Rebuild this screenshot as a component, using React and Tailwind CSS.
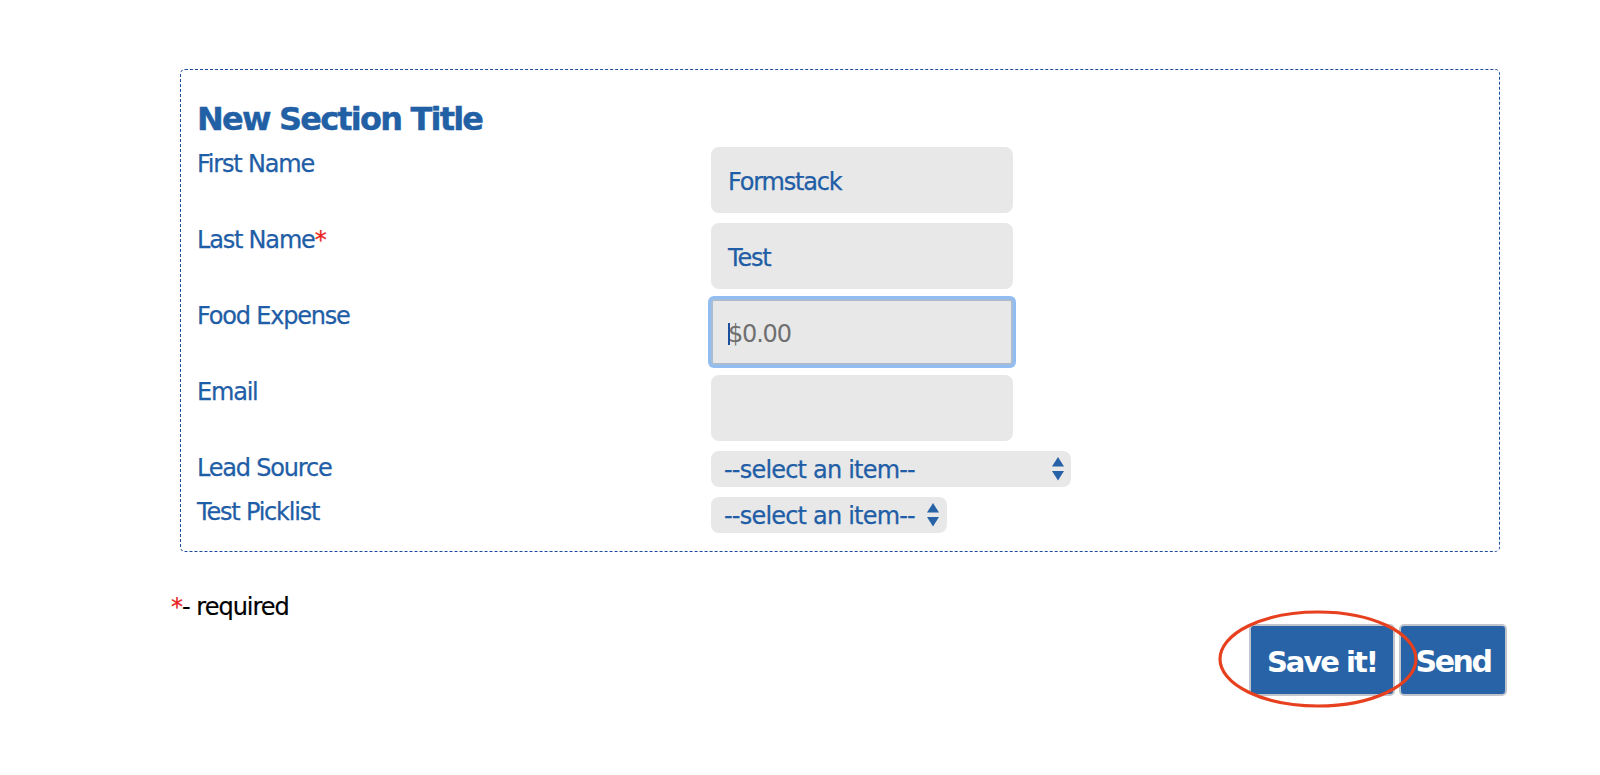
import React from "react";

const font = { fontFamily: '"DejaVu Sans", Verdana, sans-serif' };

function Arrows() {
  return (
    <svg width="12" height="24" viewBox="0 0 12 24" className="shrink-0">
      <polygon points="6,0 12,9.5 0,9.5" fill="#2761a6" />
      <polygon points="0,14 12,14 6,23.5" fill="#2761a6" />
    </svg>
  );
}

function Label({ children, req }) {
  return (
    <div className="pt-[3px] text-[24px] leading-[28px] tracking-[-1.2px] text-[#1f5ea6] [-webkit-text-stroke:0.25px_#1f5ea6]">
      {children}
      {req && <span className="text-[#e8231c] [-webkit-text-stroke:0.25px_#e8231c]">*</span>}
    </div>
  );
}

function TextBox({ value }) {
  return (
    <div className="w-[302px] h-[66px] rounded-[8px] bg-[#e8e8e8] flex items-center pl-[17px] pt-[4px] text-[24px] leading-[28px] tracking-[-1.2px] text-[#1f5ea6] [-webkit-text-stroke:0.25px_#1f5ea6]">
      {value}
    </div>
  );
}

export default function App() {
  return (
    <div className="w-[1600px] h-[775px] bg-white overflow-hidden" style={font}>
      <div className="ml-[170px] w-[1338px] pt-[69px]">
        <div className="ml-[10px] mr-[8px] border border-dashed border-[#1d4c9e] rounded-[5px] pl-[16px] pt-[30px] pb-[18px]">
          <h2 className="text-[32px] leading-[38px] font-bold tracking-[-1.8px] text-[#2260a6] [-webkit-text-stroke:0.4px_#2260a6]">
            New Section Title
          </h2>
          <div className="mt-[9px] grid grid-cols-[514px_1fr] gap-y-[10px]">
            <Label>First Name</Label>
            <TextBox value="Formstack" />

            <Label req>Last Name</Label>
            <TextBox value="Test" />

            <Label>Food Expense</Label>
            <div className="w-[302px] h-[66px] rounded-[3px] bg-[#e8e8e8] border-2 border-[#a9bcd2] shadow-[0_0_0_3px_#92bdf3] flex items-center pl-[15px] pt-[4px] text-[24px] leading-[28px] tracking-[-1.2px] text-[#707070]">
              <span className="inline-block w-[2px] h-[22px] bg-[#1b4f9e] -mr-[2px] relative z-10" />
              <span>$0.00</span>
            </div>

            <Label>Email</Label>
            <TextBox value="" />

            <Label>Lead Source</Label>
            <div className="w-[360px] h-[36px] rounded-[8px] bg-[#e8e8e8] flex items-center justify-between pl-[13px] pr-[7px] text-[24px] leading-[28px] tracking-[-0.8px] text-[#1f5ea6] [-webkit-text-stroke:0.25px_#1f5ea6]">
              <span className="pt-[2px]">--select an item--</span>
              <Arrows />
            </div>

            <div className="pt-[1px] text-[24px] leading-[28px] tracking-[-1.2px] text-[#1f5ea6] [-webkit-text-stroke:0.25px_#1f5ea6]">
              Test Picklist
            </div>
            <div>
              <div className="inline-flex w-[236px] h-[36px] rounded-[8px] bg-[#e8e8e8] items-center justify-between pl-[13px] pr-[8px] text-[24px] leading-[28px] tracking-[-0.8px] text-[#1f5ea6] [-webkit-text-stroke:0.25px_#1f5ea6]">
                <span className="pt-[2px]">--select an item--</span>
                <Arrows />
              </div>
            </div>
          </div>
        </div>

        <div className="mt-[41px] pl-[1px] text-[24px] leading-[28px] tracking-[-1px] text-black">
          <span className="text-[#e8231c] [-webkit-text-stroke:0.2px_#e8231c]">*</span>
          <span className="[-webkit-text-stroke:0.2px_#000]">- required</span>
        </div>

        <div className="mt-[3px] flex justify-end gap-[4px] pr-[1px]">
          <div className="relative">
            <button className="w-[146px] h-[72px] rounded-[5px] bg-[#2763a6] border-2 border-[#c2c6cc] text-white font-bold text-[29px] leading-[34px] tracking-[-2px] pt-[3px]" style={font}>
              Save it!
            </button>
            <svg
              className="absolute left-[-31px] top-[-14px] z-10 pointer-events-none"
              width="200"
              height="98"
              viewBox="0 0 200 98"
            >
              <ellipse cx="100" cy="49" rx="98" ry="47" fill="none" stroke="#e6401f" strokeWidth="3.2" />
            </svg>
          </div>
          <button className="w-[108px] h-[72px] rounded-[5px] bg-[#2763a6] border-2 border-[#c2c6cc] text-white font-bold text-[30px] leading-[34px] tracking-[-2.5px] pt-[3px]" style={font}>
            Send
          </button>
        </div>
      </div>
    </div>
  );
}
